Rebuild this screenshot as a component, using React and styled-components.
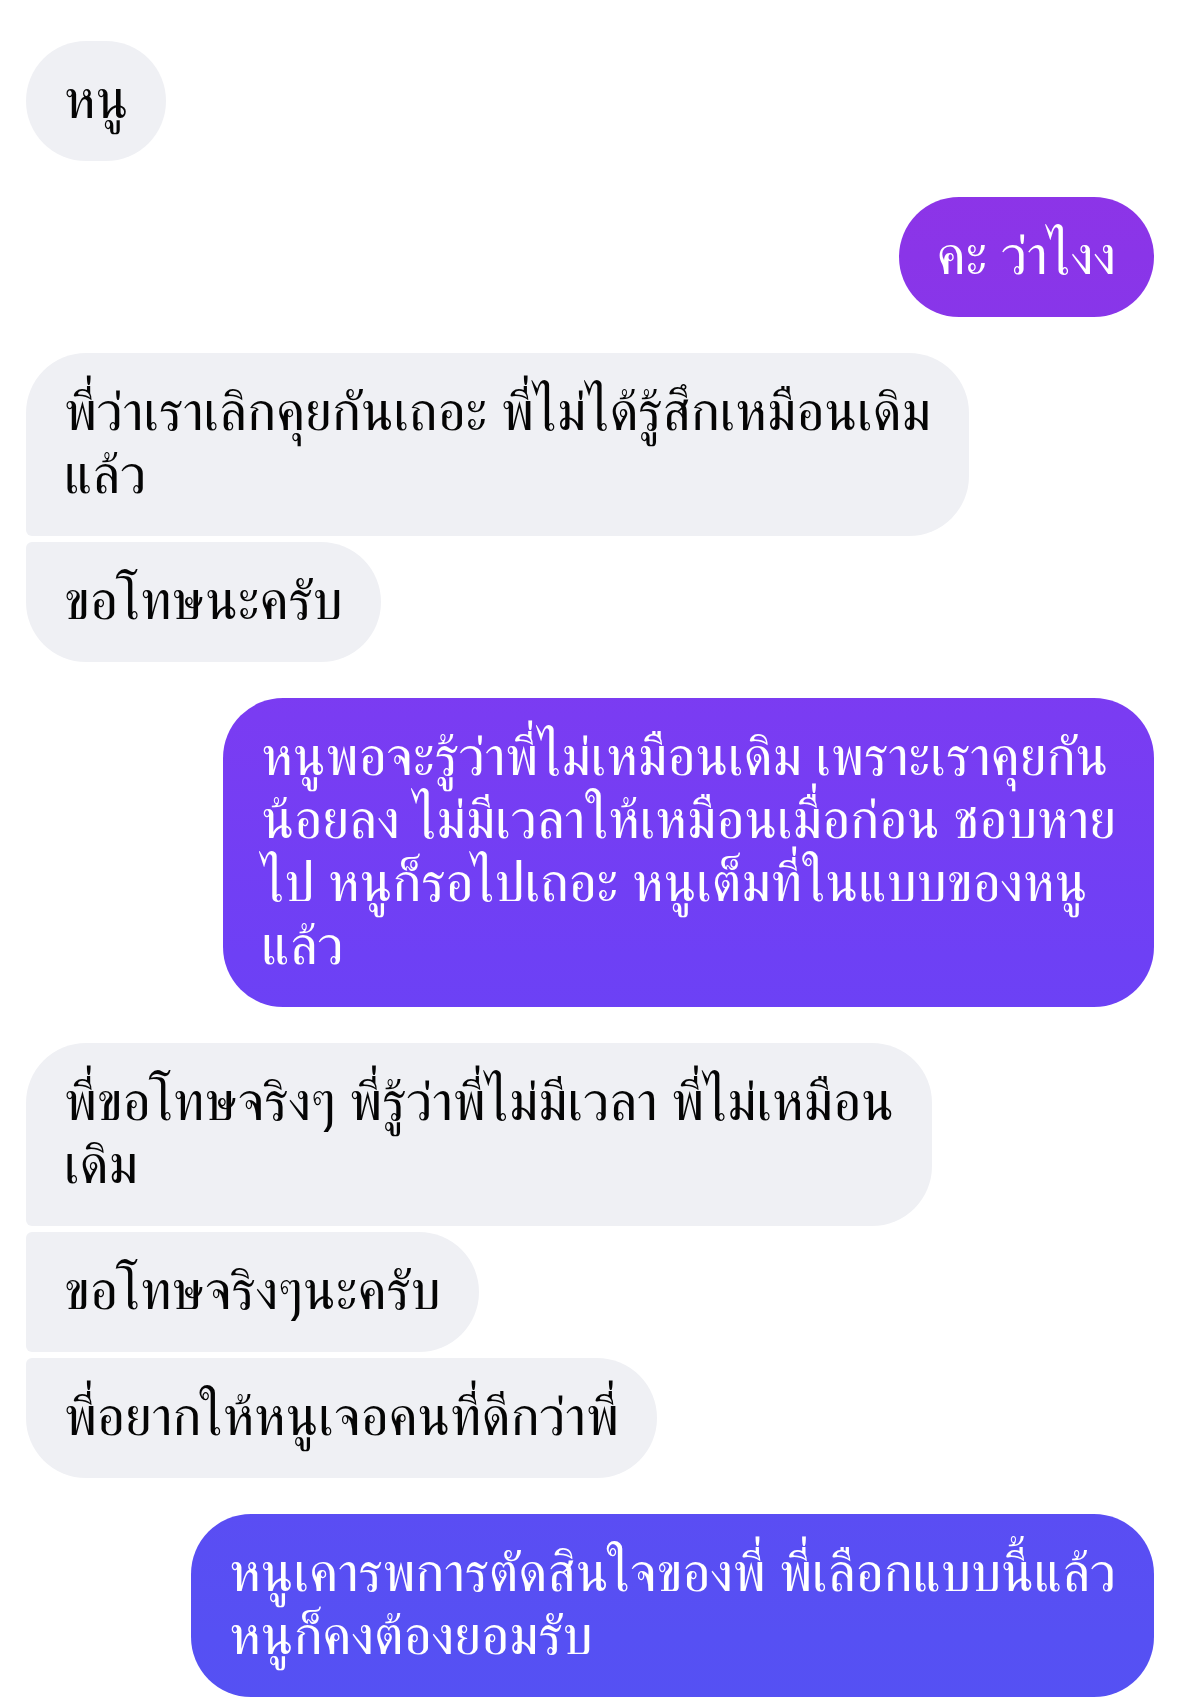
import React from "react";
import styled, { createGlobalStyle } from "styled-components";

const GlobalStyle = createGlobalStyle`
  html, body { margin: 0; padding: 0; background: #ffffff; }
  body { font-family: "FreeSerif", "Loma", "Noto Sans Thai", sans-serif; }
`;

const Thread = styled.div`
  display: flex;
  flex-direction: column;
  gap: 36px;
  padding: 41px 24px 0 26px;
`;

const Group = styled.div`
  display: flex;
  flex-direction: column;
  gap: 6px;
  align-items: ${(p) => (p.$mine ? "flex-end" : "flex-start")};
`;

const BIG = 60;
const SMALL = 6;

const Bubble = styled.div`
  box-sizing: border-box;
  padding: 28.5px 38px;
  font-family: "FreeSerif", "Loma", "Noto Sans Thai", sans-serif;
  font-size: 54.4px;
  line-height: 63px;
  color: ${(p) => (p.$mine ? "#ffffff" : "#050505")};
  background: ${(p) =>
    p.$mine
      ? "linear-gradient(180deg, #9433e6 0%, #8a35e8 15%, #7a3cf2 42%, #6e40f5 56%, #5650f3 96%, #5551f3 100%) fixed"
      : "#eff0f4"};
  border-radius: ${(p) => {
    const top = p.$first ? BIG : SMALL;
    const bottom = p.$last ? BIG : SMALL;
    return p.$mine
      ? `${BIG}px ${top}px ${bottom}px ${BIG}px`
      : `${top}px ${BIG}px ${BIG}px ${bottom}px`;
  }};
`;

const Line = styled.span`
  display: block;
  white-space: nowrap;
`;

const thread = [
  { mine: false, msgs: [["หนู"]] },
  { mine: true, msgs: [["คะ ว่าไงง"]] },
  {
    mine: false,
    msgs: [
      ["พี่ว่าเราเลิกคุยกันเถอะ พี่ไม่ได้รู้สึกเหมือนเดิม", "แล้ว"],
      ["ขอโทษนะครับ"],
    ],
  },
  {
    mine: true,
    msgs: [
      [
        "หนูพอจะรู้ว่าพี่ไม่เหมือนเดิม เพราะเราคุยกัน",
        "น้อยลง ไม่มีเวลาให้เหมือนเมื่อก่อน ชอบหาย",
        "ไป หนูก็รอไปเถอะ หนูเต็มที่ในแบบของหนู",
        "แล้ว",
      ],
    ],
  },
  {
    mine: false,
    msgs: [
      ["พี่ขอโทษจริงๆ พี่รู้ว่าพี่ไม่มีเวลา พี่ไม่เหมือน", "เดิม"],
      ["ขอโทษจริงๆนะครับ"],
      ["พี่อยากให้หนูเจอคนที่ดีกว่าพี่"],
    ],
  },
  {
    mine: true,
    msgs: [["หนูเคารพการตัดสินใจของพี่ พี่เลือกแบบนี้แล้ว", "หนูก็คงต้องยอมรับ"]],
  },
];

export default function App() {
  return (
    <>
      <GlobalStyle />
      <Thread>
        {thread.map((g, gi) => (
          <Group key={gi} $mine={g.mine}>
            {g.msgs.map((lines, mi) => (
              <Bubble
                key={mi}
                $mine={g.mine}
                $first={mi === 0}
                $last={mi === g.msgs.length - 1}
              >
                {lines.map((l, li) => (
                  <Line key={li}>{l}</Line>
                ))}
              </Bubble>
            ))}
          </Group>
        ))}
      </Thread>
    </>
  );
}
